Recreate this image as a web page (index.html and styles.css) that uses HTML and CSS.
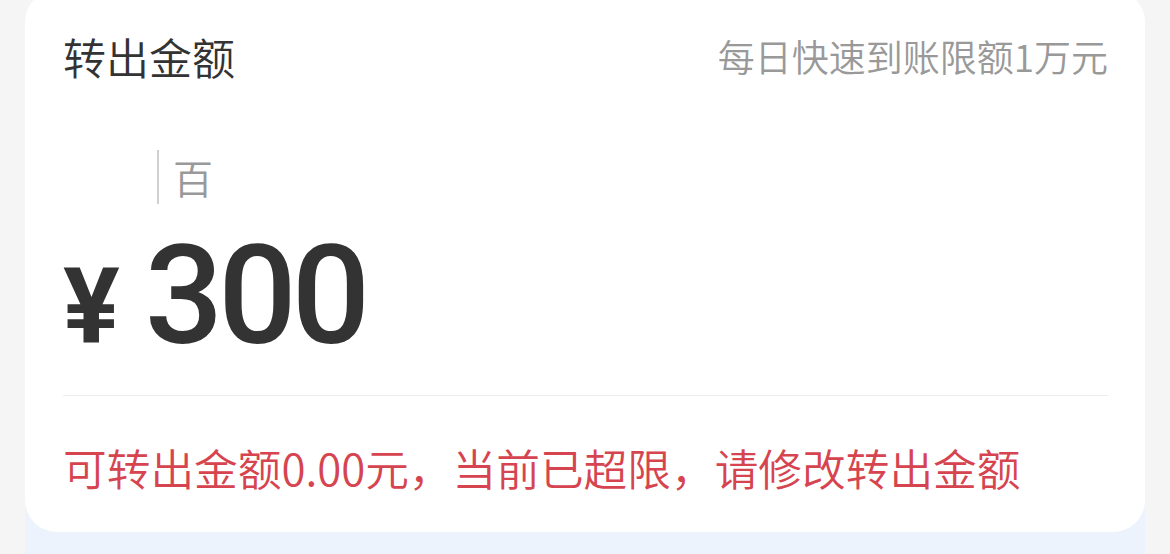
FILE: index.html
```html
<!DOCTYPE html>
<html lang="zh-CN">
<head>
<meta charset="utf-8">
<title>转出金额</title>
<link rel="stylesheet" href="styles.css">
</head>
<body>
<div class="page">
  <div class="panel">
    <div class="card">
      <div class="header">
        <span class="title">转出金额</span>
        <span class="limit">每日快速到账限额1万元</span>
      </div>
      <div class="hint">
        <span class="cursor"></span>
        <span class="unit">百</span>
      </div>
      <div class="amount">
        <span class="yen">¥</span>
        <span class="value">300</span>
      </div>
      <div class="divider"></div>
      <div class="error">可转出金额0.00元，当前已超限，请修改转出金额</div>
    </div>
  </div>
</div>
</body>
</html>
```

FILE: styles.css
```css
html, body {
  margin: 0;
  padding: 0;
  background: #f5f5f5;
  height: 100%;
  overflow: hidden;
}
body {
  font-family: "Noto Sans CJK SC", "Noto Sans", sans-serif;
}
.page {
  padding: 0 25px;
}
.panel {
  margin-top: -10px;
  padding-bottom: 24px;
  background: linear-gradient(#f5f5f5 0, #f5f5f5 480px, #edf3fd 480px);
}
.card {
  background: #ffffff;
  border-radius: 32px;
  padding: 36px 37px 35px 38px;
}
.header {
  display: flex;
  justify-content: space-between;
  align-items: center;
  height: 60px;
}
.title {
  font-size: 43px;
  font-weight: 350;
  color: #333333;
  line-height: 60px;
}
.limit {
  font-size: 37px;
  font-weight: 350;
  color: #999999;
  line-height: 60px;
}
.hint {
  display: flex;
  align-items: center;
  height: 54px;
  margin-top: 64px;
  padding-left: 94px;
  gap: 14px;
}
.cursor {
  width: 2px;
  height: 54px;
  background: #d0d0d0;
}
.unit {
  font-size: 40px;
  font-weight: 350;
  color: #999999;
  line-height: 54px;
}
.amount {
  display: flex;
  align-items: baseline;
  margin-top: 23px;
  height: 140px;
  font-family: Roboto, "Liberation Sans", sans-serif;
  color: #333333;
}
.yen {
  font-size: 106px;
  font-weight: 700;
  line-height: 1;
  margin-right: 25px;
}
.value {
  font-size: 138px;
  font-weight: 500;
  letter-spacing: -5px;
  line-height: 1;
}
.divider {
  height: 1px;
  background: #ececec;
  margin-top: 28px;
}
.error {
  margin-top: 41px;
  font-size: 43.7px;
  font-weight: 350;
  line-height: 60px;
  color: #d6454f;
}
```
